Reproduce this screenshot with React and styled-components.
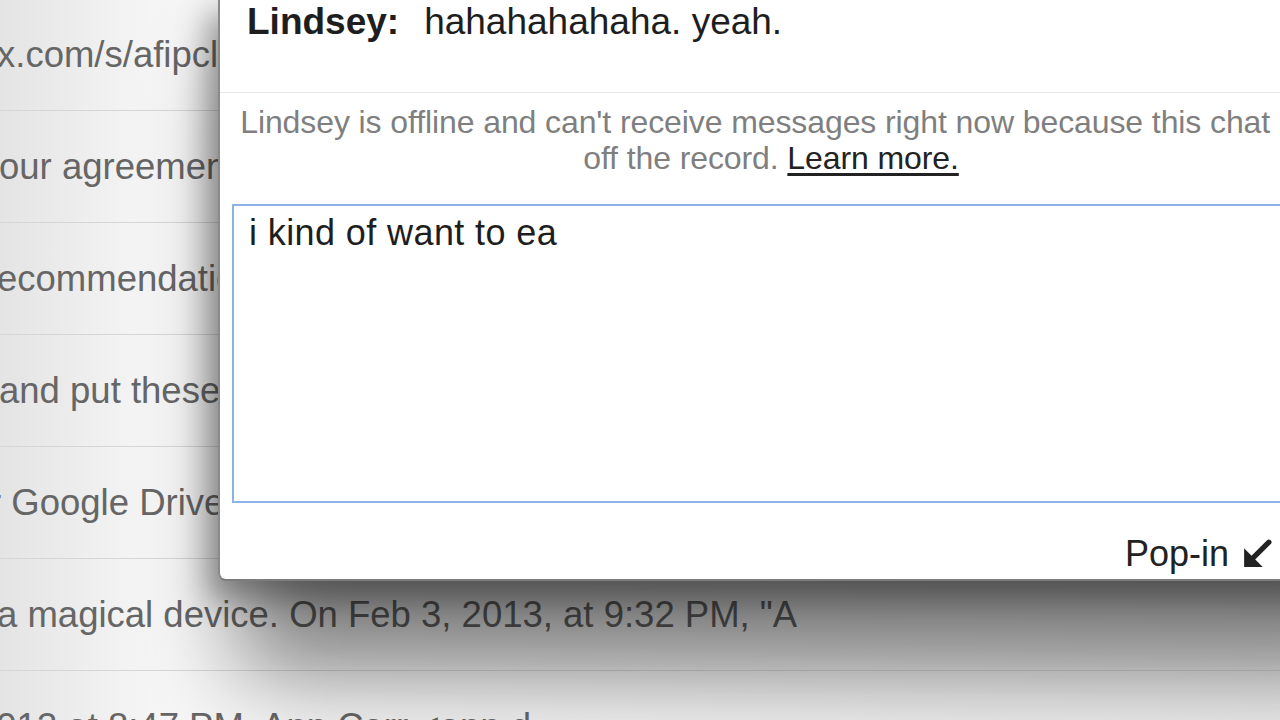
import React from "react";
import styled, { createGlobalStyle } from "styled-components";

const rows = [
  { text: "x.com/s/afipclo", indent: -3 },
  { text: "our agreement", indent: -1 },
  { text: "ecommendation", indent: -3 },
  { text: "and put these", indent: -1 },
  { text: "r Google Drive", indent: -11 },
  { text: "a magical device. On Feb 3, 2013, at 9:32 PM, \"A", indent: -3 },
  { text: "2013 at 8:47 PM, Ann Carr <ann.d", indent: -24 },
];

function PopInArrow() {
  return (
    <svg width="31" height="31" viewBox="0 0 30 30">
      <path d="M27 4 L10 21" stroke="#222" strokeWidth="5" strokeLinecap="round" />
      <path d="M3 10 L3 28 L21 28 Z" fill="#222" />
    </svg>
  );
}

function App() {
  return (
    <>
      <GlobalStyle />
      <Screen>
        <MailList>
          {rows.map((row, i) => (
            <MailRow key={i} $indent={row.indent}>
              {row.text}
            </MailRow>
          ))}
        </MailList>

        <ChatWindow>
          <Message>
            <Sender>Lindsey:</Sender>
            <span>hahahahahaha. yeah.</span>
          </Message>
          <Notice>
            Lindsey is offline and can't receive messages right now because this chat is
            <br />
            off the record. <LearnMore>Learn more.</LearnMore>
          </Notice>
          <Compose defaultValue="i kind of want to ea" spellCheck={false} />
          <Footer>
            <PopIn>
              Pop-in
              <PopInArrow />
            </PopIn>
          </Footer>
        </ChatWindow>
      </Screen>
    </>
  );
}

export default App;

const GlobalStyle = createGlobalStyle`
  body {
    margin: 0;
    overflow: hidden;
    font-family: "Liberation Sans", Arial, sans-serif;
  }
`;

const Screen = styled.div`
  position: relative;
  width: 1280px;
  height: 720px;
  overflow: hidden;
  background: linear-gradient(to right, #e4e4e4 0%, #f2f2f2 120px, #f6f6f6 170px, #ececec 100%);
`;

const MailList = styled.div`
  margin-top: -1px;
`;

const MailRow = styled.div`
  height: 111px;
  border-bottom: 1px solid #d6d6d6;
  display: flex;
  align-items: center;
  text-indent: ${(p) => p.$indent}px;
  font-size: 36.5px;
  color: #666;
  white-space: nowrap;
`;

const ChatWindow = styled.div`
  position: absolute;
  top: 0;
  left: 218px;
  width: 1102px;
  height: 579px;
  display: flex;
  flex-direction: column;
  background: #fff;
  border-left: 2px solid #8a8a8a;
  border-bottom: 2px solid #7c7c7c;
  border-bottom-left-radius: 8px;
  box-shadow: -8px 16px 30px 2px rgba(0, 0, 0, 0.35),
    40px 70px 90px 20px rgba(0, 0, 0, 0.48);
`;

const Message = styled.div`
  height: 89px;
  padding: 3px 0 0 27px;
  border-bottom: 1px solid #e8e8e8;
  font-size: 37px;
  line-height: 1;
  color: #1e1e1e;
  white-space: nowrap;
`;

const Sender = styled.b`
  margin-right: 25px;
`;

const Notice = styled.div`
  padding: 11px 10px 0;
  text-align: center;
  font-size: 32px;
  line-height: 36px;
  letter-spacing: -0.1px;
  color: #7f7f7f;
  white-space: nowrap;
`;

const LearnMore = styled.a`
  color: #222;
  text-decoration: underline;
  text-underline-offset: 4px;
`;

const Compose = styled.textarea`
  margin: 28px 12px 0 12px;
  height: 299px;
  box-sizing: border-box;
  padding: 5px 15px;
  border: 2px solid #8db2e6;
  outline: none;
  resize: none;
  font-family: "Liberation Sans", Arial, sans-serif;
  font-size: 36px;
  letter-spacing: 0.4px;
  line-height: 1.2;
  color: #1e1e1e;
`;

const Footer = styled.div`
  flex: 1;
  display: flex;
  align-items: flex-end;
  justify-content: flex-end;
  padding: 0 50px 5px 0;
`;

const PopIn = styled.div`
  display: flex;
  align-items: center;
  gap: 12px;
  font-size: 36px;
  line-height: 41px;
  color: #222;
`;
